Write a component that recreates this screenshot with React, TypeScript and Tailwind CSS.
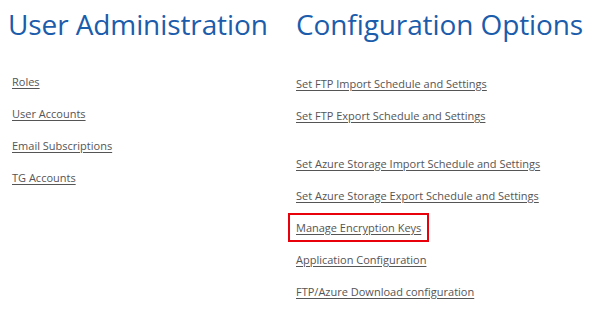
const userLinks = ['Roles', 'User Accounts', 'Email Subscriptions', 'TG Accounts'];

const configLinks: { label: string; gapBefore?: boolean; boxed?: boolean }[] = [
  { label: 'Set FTP Import Schedule and Settings' },
  { label: 'Set FTP Export Schedule and Settings' },
  { label: 'Set Azure Storage Import Schedule and Settings', gapBefore: true },
  { label: 'Set Azure Storage Export Schedule and Settings' },
  { label: 'Manage Encryption Keys', boxed: true },
  { label: 'Application Configuration' },
  { label: 'FTP/Azure Download configuration' },
];

const LinkRow = ({ label, boxed }: { label: string; boxed?: boolean }) => (
  <div className="h-[32px] flex items-center">
    <a
      href="#"
      className={
        boxed
          ? 'text-[11px] leading-none text-[#555] underline underline-offset-2 border-2 border-[#e8000b] -ml-[8px] px-[6px] py-[7px]'
          : 'text-[11px] leading-none text-[#555] underline underline-offset-2'
      }
    >
      {label}
    </a>
  </div>
);

export default function App() {
  return (
    <div className="w-[595px] h-[319px] bg-white flex font-['Open_Sans',sans-serif]">
      <div className="w-[288px] pl-[8px]">
        <h1 className="text-[28px] leading-none text-[#1b5cab] mt-[10px] tracking-[-0.1px]">User Administration</h1>
        <div className="pl-[4px] mt-[27px]">
          {userLinks.map((l) => (
            <LinkRow key={l} label={l} />
          ))}
        </div>
      </div>
      <div className="flex-1 pl-[8px]">
        <h1 className="text-[28px] leading-none text-[#1b5cab] mt-[10px] tracking-[-0.1px]">Configuration Options</h1>
        <div className="mt-[29px]">
          {configLinks.map((l) => (
            <div key={l.label} className={l.gapBefore ? 'mt-[16px]' : ''}>
              <LinkRow label={l.label} boxed={l.boxed} />
            </div>
          ))}
        </div>
      </div>
    </div>
  );
}
